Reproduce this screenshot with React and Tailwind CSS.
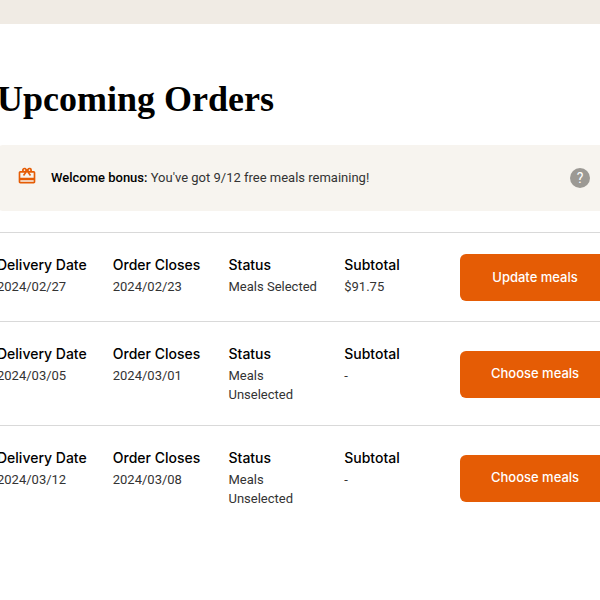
import { MdOutlineRedeem } from 'react-icons/md';

const orders = [
  {
    id: 1,
    delivery: '2024/02/27',
    closes: '2024/02/23',
    status: 'Meals Selected',
    subtotal: '$91.75',
    action: 'Update meals'
  },
  {
    id: 2,
    delivery: '2024/03/05',
    closes: '2024/03/01',
    status: 'Meals Unselected',
    subtotal: '-',
    action: 'Choose meals'
  },
  {
    id: 3,
    delivery: '2024/03/12',
    closes: '2024/03/08',
    status: 'Meals Unselected',
    subtotal: '-',
    action: 'Choose meals'
  }
];

function Field({ label, value }) {
  return (
    <div className="pb-px">
      <dt className="font-['Inter',sans-serif] text-sm leading-[22px] font-medium whitespace-nowrap text-black">
        {label}
      </dt>
      <dd className="mt-px pr-5 text-[13px] leading-[19px] font-normal text-[#333333]">
        {value}
      </dd>
    </div>
  );
}

function OrderRow({ order }) {
  return (
    <li className="flex items-center border-t border-[#d9d9d9] pt-[21px] pb-5">
      <dl className="grid flex-1 grid-cols-4 self-start">
        <Field label="Delivery Date" value={order.delivery} />
        <Field label="Order Closes" value={order.closes} />
        <Field label="Status" value={order.status} />
        <Field label="Subtotal" value={order.subtotal} />
      </dl>
      <button className="h-[47px] w-[150px] shrink-0 rounded-md bg-[#e55c05] font-['Inter',sans-serif] text-[13px] font-medium text-white">
        {order.action}
      </button>
    </li>
  );
}

function App() {
  return (
    <div className="min-h-screen overflow-hidden bg-white font-['Roboto',sans-serif]">
      {/* Top strip */}
      <div className="h-6 bg-[#f0ebe4]" />

      <main className="-mr-2.5 -ml-[3px] pt-[51px]">
        <h1 className="font-['Liberation_Serif',serif] text-4xl leading-[48px] font-bold text-black">
          Upcoming Orders
        </h1>

        {/* Bonus banner */}
        <div className="mt-[22px] flex h-[66px] items-center rounded-md bg-[#f7f4ef] px-5">
          <MdOutlineRedeem className="mr-3.5 mb-1 size-5 shrink-0 text-[#e55c05]" />
          <p className="flex-1 text-[13px] leading-5 font-normal text-[#333333]">
            <strong className="font-medium text-black">Welcome bonus:</strong>{' '}
            You've got 9/12 free meals remaining!
          </p>
          <button
            aria-label="Help"
            className="size-5 rounded-full bg-[#9c9994] text-sm leading-5 text-white"
          >
            ?
          </button>
        </div>

        {/* Orders */}
        <ul className="mt-[21px]">
          {orders.map((order) => (
            <OrderRow key={order.id} order={order} />
          ))}
        </ul>
      </main>
    </div>
  );
}

export default App;
